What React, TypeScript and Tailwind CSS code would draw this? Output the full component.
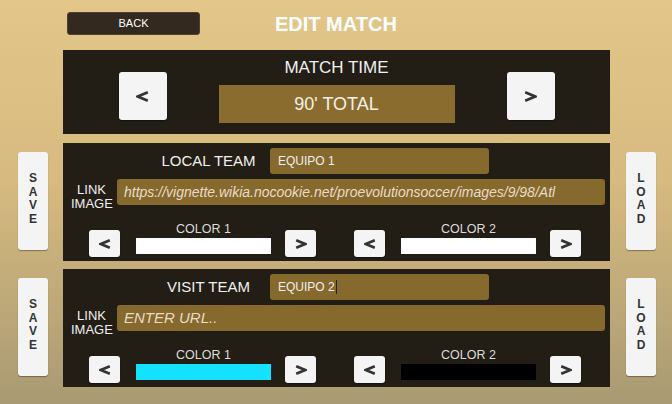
import React from 'react';

const font = { fontFamily: '"Liberation Sans", Arial, sans-serif' };

const Chevron: React.FC<{ dir: '<' | '>'; w: number; h: number }> = ({ dir, w, h }) => (
  <svg width={w} height={h} viewBox={`0 0 ${w} ${h}`} fill="none">
    <polyline
      points={
        dir === '<'
          ? `${w - 1.2},1.2 1.8,${h / 2} ${w - 1.2},${h - 1.2}`
          : `1.2,1.2 ${w - 1.8},${h / 2} 1.2,${h - 1.2}`
      }
      stroke="#333333"
      strokeWidth={2.6}
      strokeLinejoin="miter"
    />
  </svg>
);

const ArrowBtn: React.FC<{ dir: '<' | '>'; big?: boolean }> = ({ dir, big }) => (
  <button
    className={
      big
        ? 'flex h-[48px] w-[48px] items-center justify-center rounded-[3px] bg-[#f4f4f4] shadow-[0_1px_1px_rgba(0,0,0,0.35)]'
        : 'flex h-[27px] w-[31px] items-center justify-center rounded-[3px] bg-[#f4f4f4] shadow-[0_1px_1px_rgba(0,0,0,0.35)]'
    }
  >
    {big ? <Chevron dir={dir} w={13} h={11} /> : <Chevron dir={dir} w={12} h={10} />}
  </button>
);

const SideBtn: React.FC<{ label: string; top: number }> = ({ label, top }) => (
  <button
    className="flex h-[98px] w-[30px] flex-col items-center justify-center rounded-[3px] bg-[#f4f4f4] pb-[4px] text-[12px] font-bold leading-[13.5px] text-[#333333] shadow-[0_1px_1px_rgba(0,0,0,0.35)]"
    style={{ marginTop: top }}
  >
    {label.split('').map((c, i) => (
      <span key={i}>{c}</span>
    ))}
  </button>
);

const ColorGroup: React.FC<{ label: string; color: string }> = ({ label, color }) => (
  <div className="flex items-end">
    <ArrowBtn dir="<" />
    <div className="ml-[16px] mr-[14px] flex w-[135px] flex-col items-center pb-[3px]">
      <div className="text-[12.5px] leading-[14px] text-[#dcdcdc]">{label}</div>
      <div className="mt-[2px] h-[16px] w-full" style={{ background: color }} />
    </div>
    <ArrowBtn dir=">" />
  </div>
);

const TeamPanel: React.FC<{
  title: string;
  name: string;
  cursor?: boolean;
  url?: string;
  c1: string;
  c2: string;
}> = ({ title, name, cursor, url, c1, c2 }) => (
  <div className="flex h-[118px] w-[547px] flex-col bg-[#221d15] pt-[5px]">
    <div className="flex h-[26px] items-center">
      <div className="ml-[86px] w-[119px] text-center text-[15px] text-[#f0f0f0]">{title}</div>
      <div className="ml-[2px] flex h-[26px] w-[219px] items-center rounded-[3px] bg-[#86692c] pl-[8px] text-[12px] text-[#eeeeee]">
        {name}
        {cursor && <span className="ml-[1px] h-[14px] w-[1px] bg-[#222]" />}
      </div>
    </div>
    <div className="mt-[5px] flex items-start">
      <div className="ml-[8px] mt-[4px] w-[41px] text-center text-[13px] leading-[14px] text-[#f0f0f0]">
        LINK
        <br />
        IMAGE
      </div>
      <div className="ml-[5px] flex h-[26px] w-[488px] items-center overflow-hidden whitespace-nowrap rounded-[3px] bg-[#86692c] pl-[7px] italic text-[#e6dcc8]">
        {url ? <span className="text-[14px]">{url}</span> : <span className="text-[15px]">ENTER URL..</span>}
      </div>
    </div>
    <div className="ml-[26px] mt-[11px] flex gap-[38px]">
      <ColorGroup label="COLOR 1" color={c1} />
      <ColorGroup label="COLOR 2" color={c2} />
    </div>
  </div>
);

export default function App() {
  return (
    <div
      className="h-[404px] w-[672px] overflow-hidden bg-[linear-gradient(180deg,#e3c689_0%,#d6ba7f_45%,#a99a73_100%)]"
      style={font}
    >
      <div className="flex h-[50px] items-start pl-[67px] pt-[12px]">
        <button className="flex h-[23px] w-[133px] items-center justify-center rounded-[3px] border border-[#4e4130] bg-[#33291e] text-[11px] text-white">
          BACK
        </button>
        <div className="ml-[75px] mt-[1px] text-[20px] font-bold leading-[22px] text-white">EDIT MATCH</div>
      </div>

      <div className="ml-[63px] flex h-[84px] w-[547px] justify-center gap-[52px] bg-[#221d15] pt-[8px]">
        <div className="mt-[14px]">
          <ArrowBtn dir="<" big />
        </div>
        <div className="flex flex-col items-center">
          <div className="text-[17px] leading-[20px] text-[#f0f0f0]">MATCH TIME</div>
          <div className="mt-[7px] flex h-[38px] w-[236px] items-center justify-center bg-[#8a6d2e] text-[18px] text-[#f4f0e6]">
            90' TOTAL
          </div>
        </div>
        <div className="mt-[14px]">
          <ArrowBtn dir=">" big />
        </div>
      </div>

      <div className="mt-[9px] flex pl-[18px]">
        <SideBtn label="SAVE" top={9} />
        <div className="ml-[15px]">
          <TeamPanel
            title="LOCAL TEAM"
            name="EQUIPO 1"
            url="https://vignette.wikia.nocookie.net/proevolutionsoccer/images/9/98/Atl"
            c1="#ffffff"
            c2="#ffffff"
          />
        </div>
        <div className="ml-[16px]">
          <SideBtn label="LOAD" top={9} />
        </div>
      </div>

      <div className="mt-[8px] flex pl-[18px]">
        <SideBtn label="SAVE" top={9} />
        <div className="ml-[15px]">
          <TeamPanel title="VISIT TEAM" name="EQUIPO 2" cursor c1="#14e2ff" c2="#000000" />
        </div>
        <div className="ml-[16px]">
          <SideBtn label="LOAD" top={9} />
        </div>
      </div>
    </div>
  );
}
